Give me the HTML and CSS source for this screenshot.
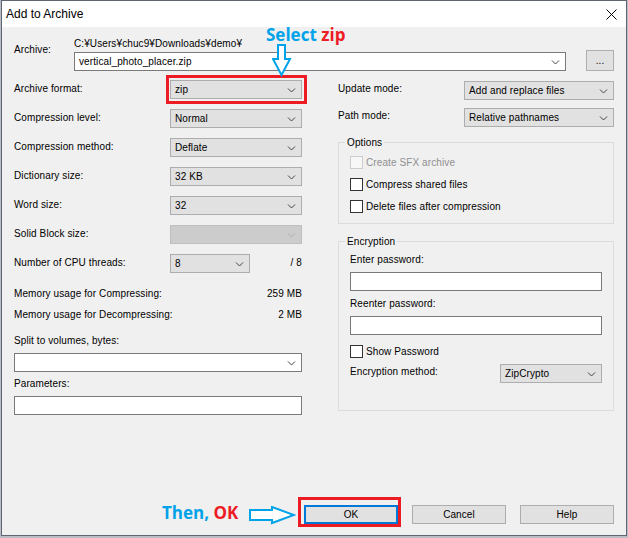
FILE: index.html
```html
<!DOCTYPE html>
<html>
<head>
<meta charset="utf-8">
<title>Add to Archive</title>
<link rel="stylesheet" href="styles.css">
</head>
<body>
<div class="window">
  <div class="titlebar">
    <span class="title">Add to Archive</span>
    <svg class="close" width="11" height="11" viewBox="0 0 11 11"><path d="M0.5 0.5l10 10M10.5 0.5l-10 10" stroke="#000" stroke-width="1" fill="none"/></svg>
  </div>
  <div class="content">
    <div class="archive-row">
      <div class="archive-label">Archive:</div>
      <div class="archive-fields">
        <div class="path">C:¥Users¥chuc9¥Downloads¥demo¥</div>
        <div class="archive-line">
          <div class="combo white">vertical_photo_placer.zip<svg class="chev" width="9" height="6" viewBox="0 0 9 6"><path d="M1 1.5l3.5 3.5 3.5-3.5" fill="none" stroke="#444"/></svg></div>
          <div class="btn browse">...</div>
        </div>
      </div>
    </div>

    <div class="columns">
      <div class="col-left">
        <div class="row"><div class="lbl">Archive format:</div><div class="combo">zip<svg class="chev" width="9" height="6" viewBox="0 0 9 6"><path d="M1 1.5l3.5 3.5 3.5-3.5" fill="none" stroke="#444"/></svg></div></div>
        <div class="row"><div class="lbl">Compression level:</div><div class="combo">Normal<svg class="chev" width="9" height="6" viewBox="0 0 9 6"><path d="M1 1.5l3.5 3.5 3.5-3.5" fill="none" stroke="#444"/></svg></div></div>
        <div class="row"><div class="lbl">Compression method:</div><div class="combo">Deflate<svg class="chev" width="9" height="6" viewBox="0 0 9 6"><path d="M1 1.5l3.5 3.5 3.5-3.5" fill="none" stroke="#444"/></svg></div></div>
        <div class="row"><div class="lbl">Dictionary size:</div><div class="combo">32 KB<svg class="chev" width="9" height="6" viewBox="0 0 9 6"><path d="M1 1.5l3.5 3.5 3.5-3.5" fill="none" stroke="#444"/></svg></div></div>
        <div class="row"><div class="lbl">Word size:</div><div class="combo">32<svg class="chev" width="9" height="6" viewBox="0 0 9 6"><path d="M1 1.5l3.5 3.5 3.5-3.5" fill="none" stroke="#444"/></svg></div></div>
        <div class="row"><div class="lbl">Solid Block size:</div><div class="combo disabled"><span></span><svg class="chev" width="9" height="6" viewBox="0 0 9 6"><path d="M1 1.5l3.5 3.5 3.5-3.5" fill="none" stroke="#b0b0b0"/></svg></div></div>
        <div class="row"><div class="lbl">Number of CPU threads:</div><div class="combo cpu">8<svg class="chev" width="9" height="6" viewBox="0 0 9 6"><path d="M1 1.5l3.5 3.5 3.5-3.5" fill="none" stroke="#444"/></svg></div><div class="slash">/ 8</div></div>

        <div class="mem first"><span>Memory usage for Compressing:</span><span>259 MB</span></div>
        <div class="mem"><span>Memory usage for Decompressing:</span><span>2 MB</span></div>

        <div class="field-label">Split to volumes, bytes:</div>
        <div class="combo white field-input"><span></span><svg class="chev" width="9" height="6" viewBox="0 0 9 6"><path d="M1 1.5l3.5 3.5 3.5-3.5" fill="none" stroke="#444"/></svg></div>
        <div class="field-label params">Parameters:</div>
        <div class="textbox field-input"></div>
      </div>

      <div class="col-right">
        <div class="row"><div class="lbl">Update mode:</div><div class="combo">Add and replace files<svg class="chev" width="9" height="6" viewBox="0 0 9 6"><path d="M1 1.5l3.5 3.5 3.5-3.5" fill="none" stroke="#444"/></svg></div></div>
        <div class="row"><div class="lbl">Path mode:</div><div class="combo">Relative pathnames<svg class="chev" width="9" height="6" viewBox="0 0 9 6"><path d="M1 1.5l3.5 3.5 3.5-3.5" fill="none" stroke="#444"/></svg></div></div>

        <fieldset class="group options">
          <legend>Options</legend>
          <div class="group-body">
            <div class="check disabled"><span class="box"></span>Create SFX archive</div>
            <div class="check"><span class="box"></span>Compress shared files</div>
            <div class="check"><span class="box"></span>Delete files after compression</div>
          </div>
        </fieldset>

        <fieldset class="group encryption">
          <legend>Encryption</legend>
          <div class="group-body">
            <div class="enc-label">Enter password:</div>
            <div class="textbox enc-input"></div>
            <div class="enc-label">Reenter password:</div>
            <div class="textbox enc-input"></div>
            <div class="check show-pw"><span class="box"></span>Show Password</div>
            <div class="enc-method"><div class="lbl">Encryption method:</div><div class="combo">ZipCrypto<svg class="chev" width="9" height="6" viewBox="0 0 9 6"><path d="M1 1.5l3.5 3.5 3.5-3.5" fill="none" stroke="#444"/></svg></div></div>
          </div>
        </fieldset>
      </div>
    </div>

    <div class="buttons">
      <div class="btn default">OK</div>
      <div class="btn">Cancel</div>
      <div class="btn">Help</div>
    </div>
  </div>
</div>

<div class="mark mark-format"></div>
<div class="mark mark-ok"></div>
<div class="note note-select"><span class="blue">Select</span> <span class="red">zip</span></div>
<svg class="arrow arrow-down" width="20" height="33" viewBox="0 0 20 33"><path d="M6 1H13V15H18L9.5 31L1 15H6Z" fill="#fff" stroke="#00a2e8" stroke-width="2" stroke-linejoin="miter"/></svg>
<div class="note note-ok"><span class="blue">Then,</span> <span class="red">OK</span></div>
<svg class="arrow arrow-right" width="48" height="19" viewBox="0 0 48 19"><path d="M2 4H24V1L46 9L24 17V14H2Z" fill="#fff" stroke="#00a2e8" stroke-width="2"/></svg>
</body>
</html>
```

FILE: styles.css
```css
* { box-sizing: border-box; }
html, body { margin: 0; padding: 0; }
body {
  position: relative;
  width: 628px;
  height: 538px;
  overflow: hidden;
  background: #b9bdc4;
  font-family: "Liberation Sans", Arial, sans-serif;
  font-size: 10px;
  letter-spacing: 0.1px;
  color: #000;
}
.window {
  margin-left: 1px;
  width: 626px;
  height: 536px;
  border: 1px solid #5f6572;
  background: #f0f0f0;
  display: flex;
  flex-direction: column;
}
.titlebar {
  height: 26px;
  flex: none;
  background: #fff;
  display: flex;
  align-items: center;
  padding: 0 9px 0 4px;
  font-size: 12px;
  letter-spacing: 0;
}
.titlebar .close { margin-left: auto; }
.content {
  flex: 1;
  display: flex;
  flex-direction: column;
  padding: 10px 12px 11px 12px;
}
.archive-row { display: flex; }
.archive-label { width: 60px; padding-top: 6px; line-height: 13px; }
.archive-fields { flex: 1; }
.path { line-height: 13px; }
.archive-line { display: flex; align-items: flex-end; height: 21px; }
.archive-line .combo { flex: 1; }

.combo {
  height: 19px;
  display: flex;
  align-items: center;
  justify-content: space-between;
  padding: 0 5px 0 4px;
  border: 1px solid #adadad;
  background: #e1e1e1;
  line-height: 13px;
  white-space: nowrap;
}
.combo .chev { flex: none; margin-top: 1px; }
.combo.white { background: #fff; border-color: #7a7a7a; }
.combo.disabled { background: #cccccc; border-color: #bfbfbf; }
.textbox { height: 19px; background: #fff; border: 1px solid #7a7a7a; }

.btn {
  height: 19px;
  width: 94px;
  display: flex;
  align-items: center;
  justify-content: center;
  border: 1px solid #adadad;
  background: #e1e1e1;
}
.btn.browse { width: 28px; height: 21px; margin-left: 20px; }
.btn.default { border: 2px solid #0078d7; }

.columns {
  margin-top: 9px;
  display: grid;
  grid-template-columns: 288px 276px;
  column-gap: 36px;
  align-items: start;
}
.col-left, .col-right { display: flex; flex-direction: column; }
.row { display: flex; align-items: flex-start; height: 19px; }
.row + .row { margin-top: 10px; }
.row .lbl { width: 156px; line-height: 13px; padding-top: 2px; }
.row .combo { width: 132px; }
.row .combo.cpu { width: 80px; }
.row .slash { margin-left: auto; line-height: 13px; padding-top: 2px; }

.mem { display: flex; justify-content: space-between; line-height: 13px; }
.mem.first { margin-top: 14px; }
.mem + .mem { margin-top: 8px; }
.field-label { margin-top: 13px; line-height: 13px; }
.field-label.params { margin-top: 5px; }
.field-input { margin-top: 6px; height: 19px; }

.col-right { padding-top: 1px; }
.col-right .row + .row { margin-top: 8px; }
.col-right .row .lbl { width: 126px; padding-top: 1px; }
.col-right .row .combo { width: 150px; }

.group {
  margin: 0;
  padding: 0;
  border: 1px solid #dcdcdc;
  min-width: 0;
}
.group legend { padding: 0 2px; margin-left: 6px; line-height: 13px; }
.group-body { padding: 7px 11px 10px 11px; }
.options { margin-top: 9px; }
.encryption { margin-top: 11px; }
.encryption .group-body { padding: 5px 11px 27px 11px; }

.check { display: flex; align-items: center; height: 13px; line-height: 13px; }
.check + .check { margin-top: 9px; }
.box {
  width: 13px;
  height: 13px;
  border: 1px solid #333;
  background: #fff;
  margin-right: 3px;
  flex: none;
}
.check.disabled { color: #8f8f8f; }
.check.disabled .box { border-color: #cccccc; background: #f7f7f7; }

.enc-label { line-height: 13px; }
.enc-input { margin-top: 6px; margin-bottom: 6px; }
.show-pw { margin-top: 10px; }
.enc-method { display: flex; align-items: flex-start; height: 19px; margin-top: 6px; }
.enc-method .lbl { line-height: 13px; padding-top: 1px; }
.enc-method .combo { width: 102px; margin-left: auto; }

.buttons {
  margin-top: auto;
  display: flex;
  justify-content: flex-end;
  gap: 14px;
}

/* annotation overlays */
.mark { position: absolute; border: 3px solid #ed1c24; }
.mark-format { left: 166px; top: 75px; width: 141px; height: 29px; }
.mark-ok { left: 298px; top: 497px; width: 103px; height: 30px; }
.note {
  position: absolute;
  font-family: "Open Sans", "Noto Sans", sans-serif;
  font-weight: 700;
  font-size: 17px;
  line-height: 20px;
  letter-spacing: 0;
  white-space: nowrap;
}
.note .blue { color: #00a2e8; }
.note .red { color: #ed1c24; }
.note-select { left: 266px; top: 25px; }
.note-ok { left: 162px; top: 503px; }
.arrow { position: absolute; }
.arrow-down { left: 272px; top: 44px; }
.arrow-right { left: 248px; top: 506px; }
```
